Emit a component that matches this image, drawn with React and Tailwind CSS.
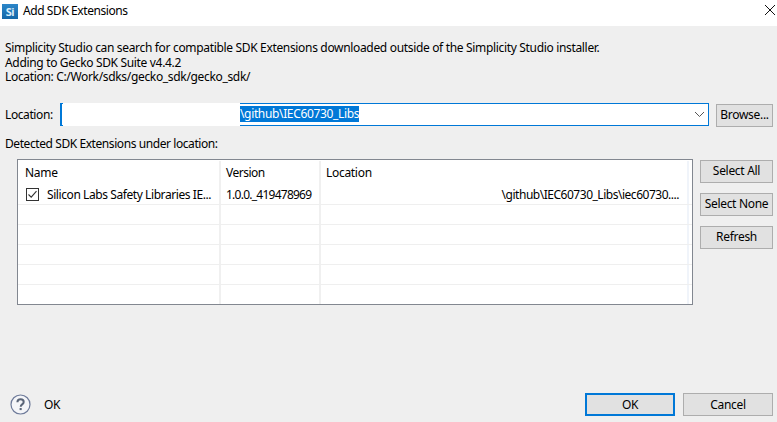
function PushButton({ label, focused = false, className = '' }) {
  return (
    <button className={`h-[23px] ${focused ? 'border-2 border-[#0078d7]' : 'border border-[#adadad]'} bg-[#e1e1e1] text-[12px] leading-none text-black flex items-center justify-center tracking-[-0.3px] ${className}`}>
      {label}
    </button>
  );
}

function HelpIcon() {
  return (
    <svg width="21" height="21" viewBox="0 0 21 21">
      <circle cx="10.5" cy="10.5" r="9.5" fill="#f4f5f8" stroke="#6d7a99" strokeWidth="1.2" />
      <path d="M7.4 8.2c0-1.9 1.4-2.9 3.2-2.9s3.1 1 3.1 2.6c0 2.4-3 2.5-3 4.8" fill="none" stroke="#5a6578" strokeWidth="2" />
      <rect x="9.6" y="14" width="2.1" height="2.1" fill="#5a6578" />
    </svg>
  );
}

const columns = 'grid grid-cols-[203px_100px_368px_1fr]';

function EmptyRow() {
  return (
    <div className={`${columns} h-[20px] border-b border-[#efefef]`}>
      <div className="border-r-2 border-[#f0f0f0]" />
      <div className="border-r-2 border-[#f0f0f0]" />
      <div className="border-r-2 border-[#f0f4fa]" />
    </div>
  );
}

export default function App() {
  return (
    <div className="w-[777px] h-[422px] overflow-hidden bg-[#efefef] flex flex-col font-['Noto_Sans','Open_Sans',sans-serif] text-[12px] text-black">
      {/* Title bar */}
      <div className="h-[26px] bg-white flex items-center pl-[2px] pr-[2px]">
        <div className="w-[16px] h-[15px] -mt-[3px] bg-gradient-to-b from-[#2b86c9] to-[#1568a8] text-[#dbeefa] text-[11px] font-bold leading-[15px] tracking-[-0.5px] text-center mr-[5px]">Si</div>
        <span className="flex-1 tracking-[-0.42px] -mt-[5px]">Add SDK Extensions</span>
        <svg width="10" height="10" viewBox="0 0 10 10" className="-mt-[6px]">
          <path d="M0 0 10 10M10 0 0 10" stroke="#111" strokeWidth="1" />
        </svg>
      </div>

      <div className="flex-1 flex flex-col pl-[5px] pr-[4px]">
        {/* Description */}
        <div className="pt-[15px] leading-[14.5px] tracking-[-0.33px]">
          <p>Simplicity Studio can search for compatible SDK Extensions downloaded outside of the Simplicity Studio installer.</p>
          <p>Adding to Gecko SDK Suite v4.4.2</p>
          <p>Location: C:/Work/sdks/gecko_sdk/gecko_sdk/</p>
        </div>

        {/* Location row */}
        <div className="mt-[18px] flex items-start h-[24px]">
          <span className="w-[55px] tracking-[-0.4px] self-center">Location:</span>
          <div className="relative w-[649px] h-[23px] border border-l-2 border-[#0078d7] bg-white flex items-center">
            <div className="absolute left-[1px] -top-[1px] w-[177px] h-[23px] bg-white" />
            <div className="w-[178px] shrink-0" />
            <span className="relative bg-[#0078d7] text-white leading-[16px] h-[16px] tracking-[-0.35px]">\github\IEC60730_Libs</span>
            <svg width="11" height="7" viewBox="0 0 11 7" className="ml-auto mr-[3px]">
              <path d="M1 1 5.5 5.5 10 1" fill="none" stroke="#555" strokeWidth="1" />
            </svg>
          </div>
          <PushButton label="Browse..." className="ml-[7px] mt-px w-[57px]" />
        </div>

        <p className="mt-[9px] leading-[16px] tracking-[-0.42px]">Detected SDK Extensions under location:</p>

        <div className="mt-[7px] flex items-start">
          {/* Table */}
          <div className="ml-[12px] w-[676px] h-[146px] border border-[#828790] bg-white pt-px overflow-hidden tracking-[-0.3px]">
            <div className={`${columns} h-[24px]`}>
              <div className="border-r-2 border-[#f0f0f0] pl-[7px] pt-[3px]">Name</div>
              <div className="border-r-2 border-[#f0f0f0] pl-[5px] pt-[3px] tracking-[-0.5px]">Version</div>
              <div className="border-r-2 border-[#f0f4fa] pl-[5px] pt-[3px]">Location</div>
            </div>
            <div className={`${columns} h-[20px] border-b border-[#efefef]`}>
              <div className="border-r-2 border-[#f0f0f0] pl-[8px] flex items-center gap-[8px] overflow-hidden whitespace-nowrap">
                <span className="w-[13px] h-[13px] shrink-0 border border-[#333] flex items-center justify-center">
                  <svg width="11" height="11" viewBox="0 0 11 11">
                    <path d="M1.5 5.5 4.2 8.2 9.5 2.2" fill="none" stroke="#333" strokeWidth="1.1" />
                  </svg>
                </span>
                <span className="tracking-[-0.42px] pt-px">Silicon Labs Safety Libraries IE...</span>
              </div>
              <div className="border-r-2 border-[#f0f0f0] pl-[5px] pt-px flex items-center tracking-[-0.75px]">1.0.0._419478969</div>
              <div className="border-r-2 border-[#f0f4fa] pt-px flex items-center justify-end pr-[8px] tracking-[-0.48px]">\github\IEC60730_Libs\iec60730....</div>
            </div>
            <EmptyRow />
            <EmptyRow />
            <EmptyRow />
            <EmptyRow />
            <EmptyRow />
          </div>

          {/* Side buttons */}
          <div className="ml-[7px] pt-px flex flex-col gap-[10px]">
            <PushButton label="Select All" className="w-[73px]" />
            <PushButton label="Select None" className="w-[73px]" />
            <PushButton label="Refresh" className="w-[73px]" />
          </div>
        </div>

        {/* Footer */}
        <div className="mt-auto mb-[6px] flex items-center">
          <div className="ml-[5px] w-[34px]"><HelpIcon /></div>
          <span className="flex-1 tracking-[-0.3px]">OK</span>
          <PushButton label="OK" focused className="w-[90px]" />
          <PushButton label="Cancel" className="ml-[8px] w-[90px]" />
        </div>
      </div>
    </div>
  );
}
